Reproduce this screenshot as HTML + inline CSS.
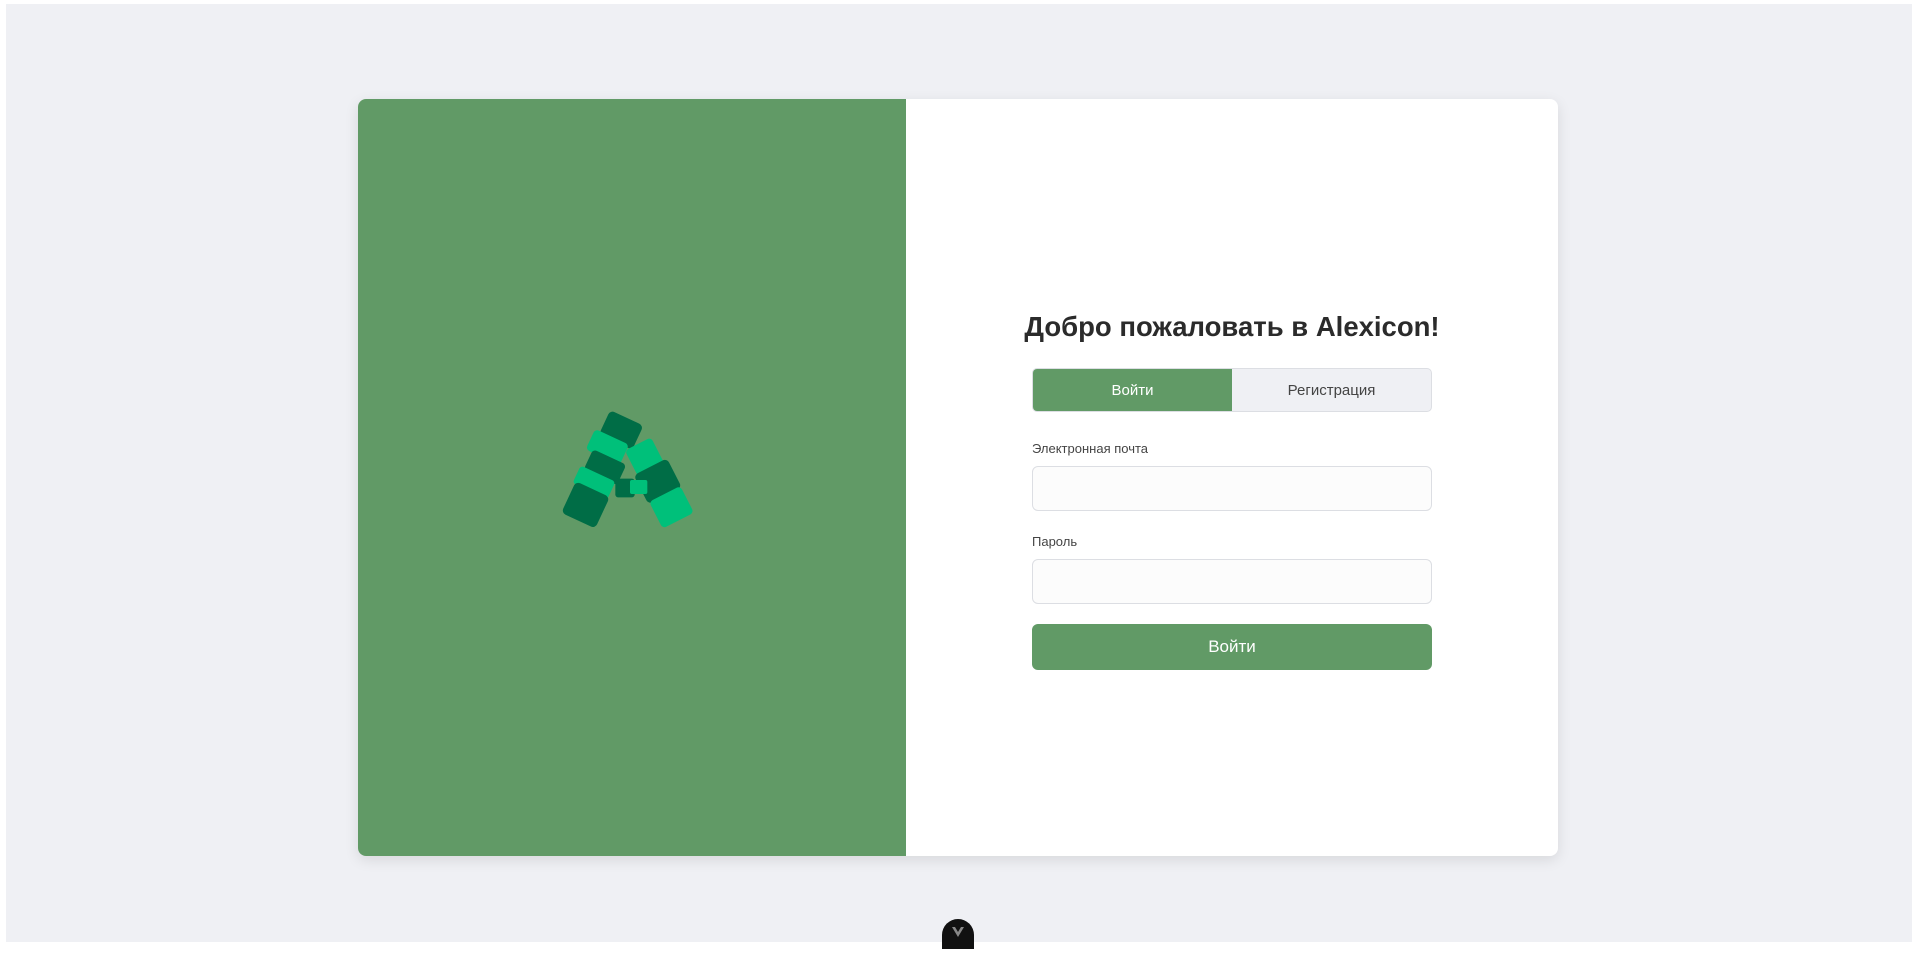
<!DOCTYPE html>
<html><head><meta charset="utf-8"><style>
html,body{margin:0;padding:0;background:#fff;width:1912px;height:942px;overflow:hidden;font-family:"Segoe UI","Liberation Sans","DejaVu Sans",sans-serif}
.bg{position:absolute;left:6px;top:4px;right:0;bottom:0;background:#eff0f4}
.card{position:absolute;left:358px;top:99px;width:1200px;height:757px;border-radius:8px;background:#fff;box-shadow:0 4px 14px rgba(0,0,0,.1);overflow:hidden}
.left{position:absolute;left:0;top:0;width:548px;height:100%;background:#619a66}
.logo{position:absolute;left:182px;top:291px}
h1{position:absolute;left:574px;width:600px;top:211px;margin:0;font-size:27.5px;font-weight:700;color:#2b2b2b;text-align:center;white-space:nowrap;line-height:34px}
.tabs{position:absolute;left:674px;top:269px;width:398px;height:42px;border:1px solid #dcdee3;border-radius:5px;overflow:hidden;display:flex;background:#eff0f4}
.tabs div{flex:1;display:flex;align-items:center;justify-content:center;font-size:15px;color:#444}
.tabs .a{background:#619a66;color:#fff}
.lbl{position:absolute;left:674px;font-size:13px;color:#444}
.inp{position:absolute;left:674px;width:398px;height:43px;border:1px solid #dcdee3;border-radius:6px;background:#fcfcfc}
.btn{position:absolute;left:674px;top:525px;width:400px;height:46px;border-radius:6px;background:#619a66;color:#fff;font-size:17px;display:flex;align-items:center;justify-content:center}
.dev{position:absolute;left:942px;top:919px;width:32px;height:30px;background:#111;border-radius:16px 16px 0 0}
</style></head><body>
<div class="bg"></div>
<div class="card">
<div class="left">
<svg class="logo" width="180" height="150" viewBox="0 0 540 450">
<g transform="rotate(25 190 235)">
<rect x="135" y="68" width="110" height="80" rx="14" fill="#006d46"/>
<rect x="118" y="138" width="112" height="68" rx="12" fill="#00c07a"/>
<rect x="138" y="196" width="110" height="68" rx="12" fill="#006d46"/>
<rect x="125" y="256" width="115" height="58" rx="10" fill="#00c07a"/>
<rect x="132" y="305" width="112" height="104" rx="14" fill="#006d46"/>
</g>
<g transform="rotate(-27 350 270)">
<rect x="305" y="148" width="88" height="88" rx="12" fill="#00c07a"/>
<rect x="295" y="226" width="112" height="98" rx="14" fill="#006d46"/>
<rect x="300" y="318" width="105" height="90" rx="12" fill="#00c07a"/>
</g>
<rect x="226" y="266" width="58" height="56" rx="8" fill="#006d46"/>
<rect x="270" y="270" width="52" height="42" rx="6" fill="#00c07a"/>
</svg>
</div>
<h1>Добро пожаловать в Alexicon!</h1>
<div class="tabs"><div class="a">Войти</div><div>Регистрация</div></div>
<div class="lbl" style="top:342px">Электронная почта</div>
<div class="inp" style="top:367px"></div>
<div class="lbl" style="top:435px">Пароль</div>
<div class="inp" style="top:460px"></div>
<div class="btn">Войти</div>
</div>
<div class="dev"><svg width="32" height="30" viewBox="0 0 32 30"><path d="M10 8 L16 18 L22 8 L19 8 L16 13 L13 8Z" fill="#888"/></svg></div>
</body></html>
